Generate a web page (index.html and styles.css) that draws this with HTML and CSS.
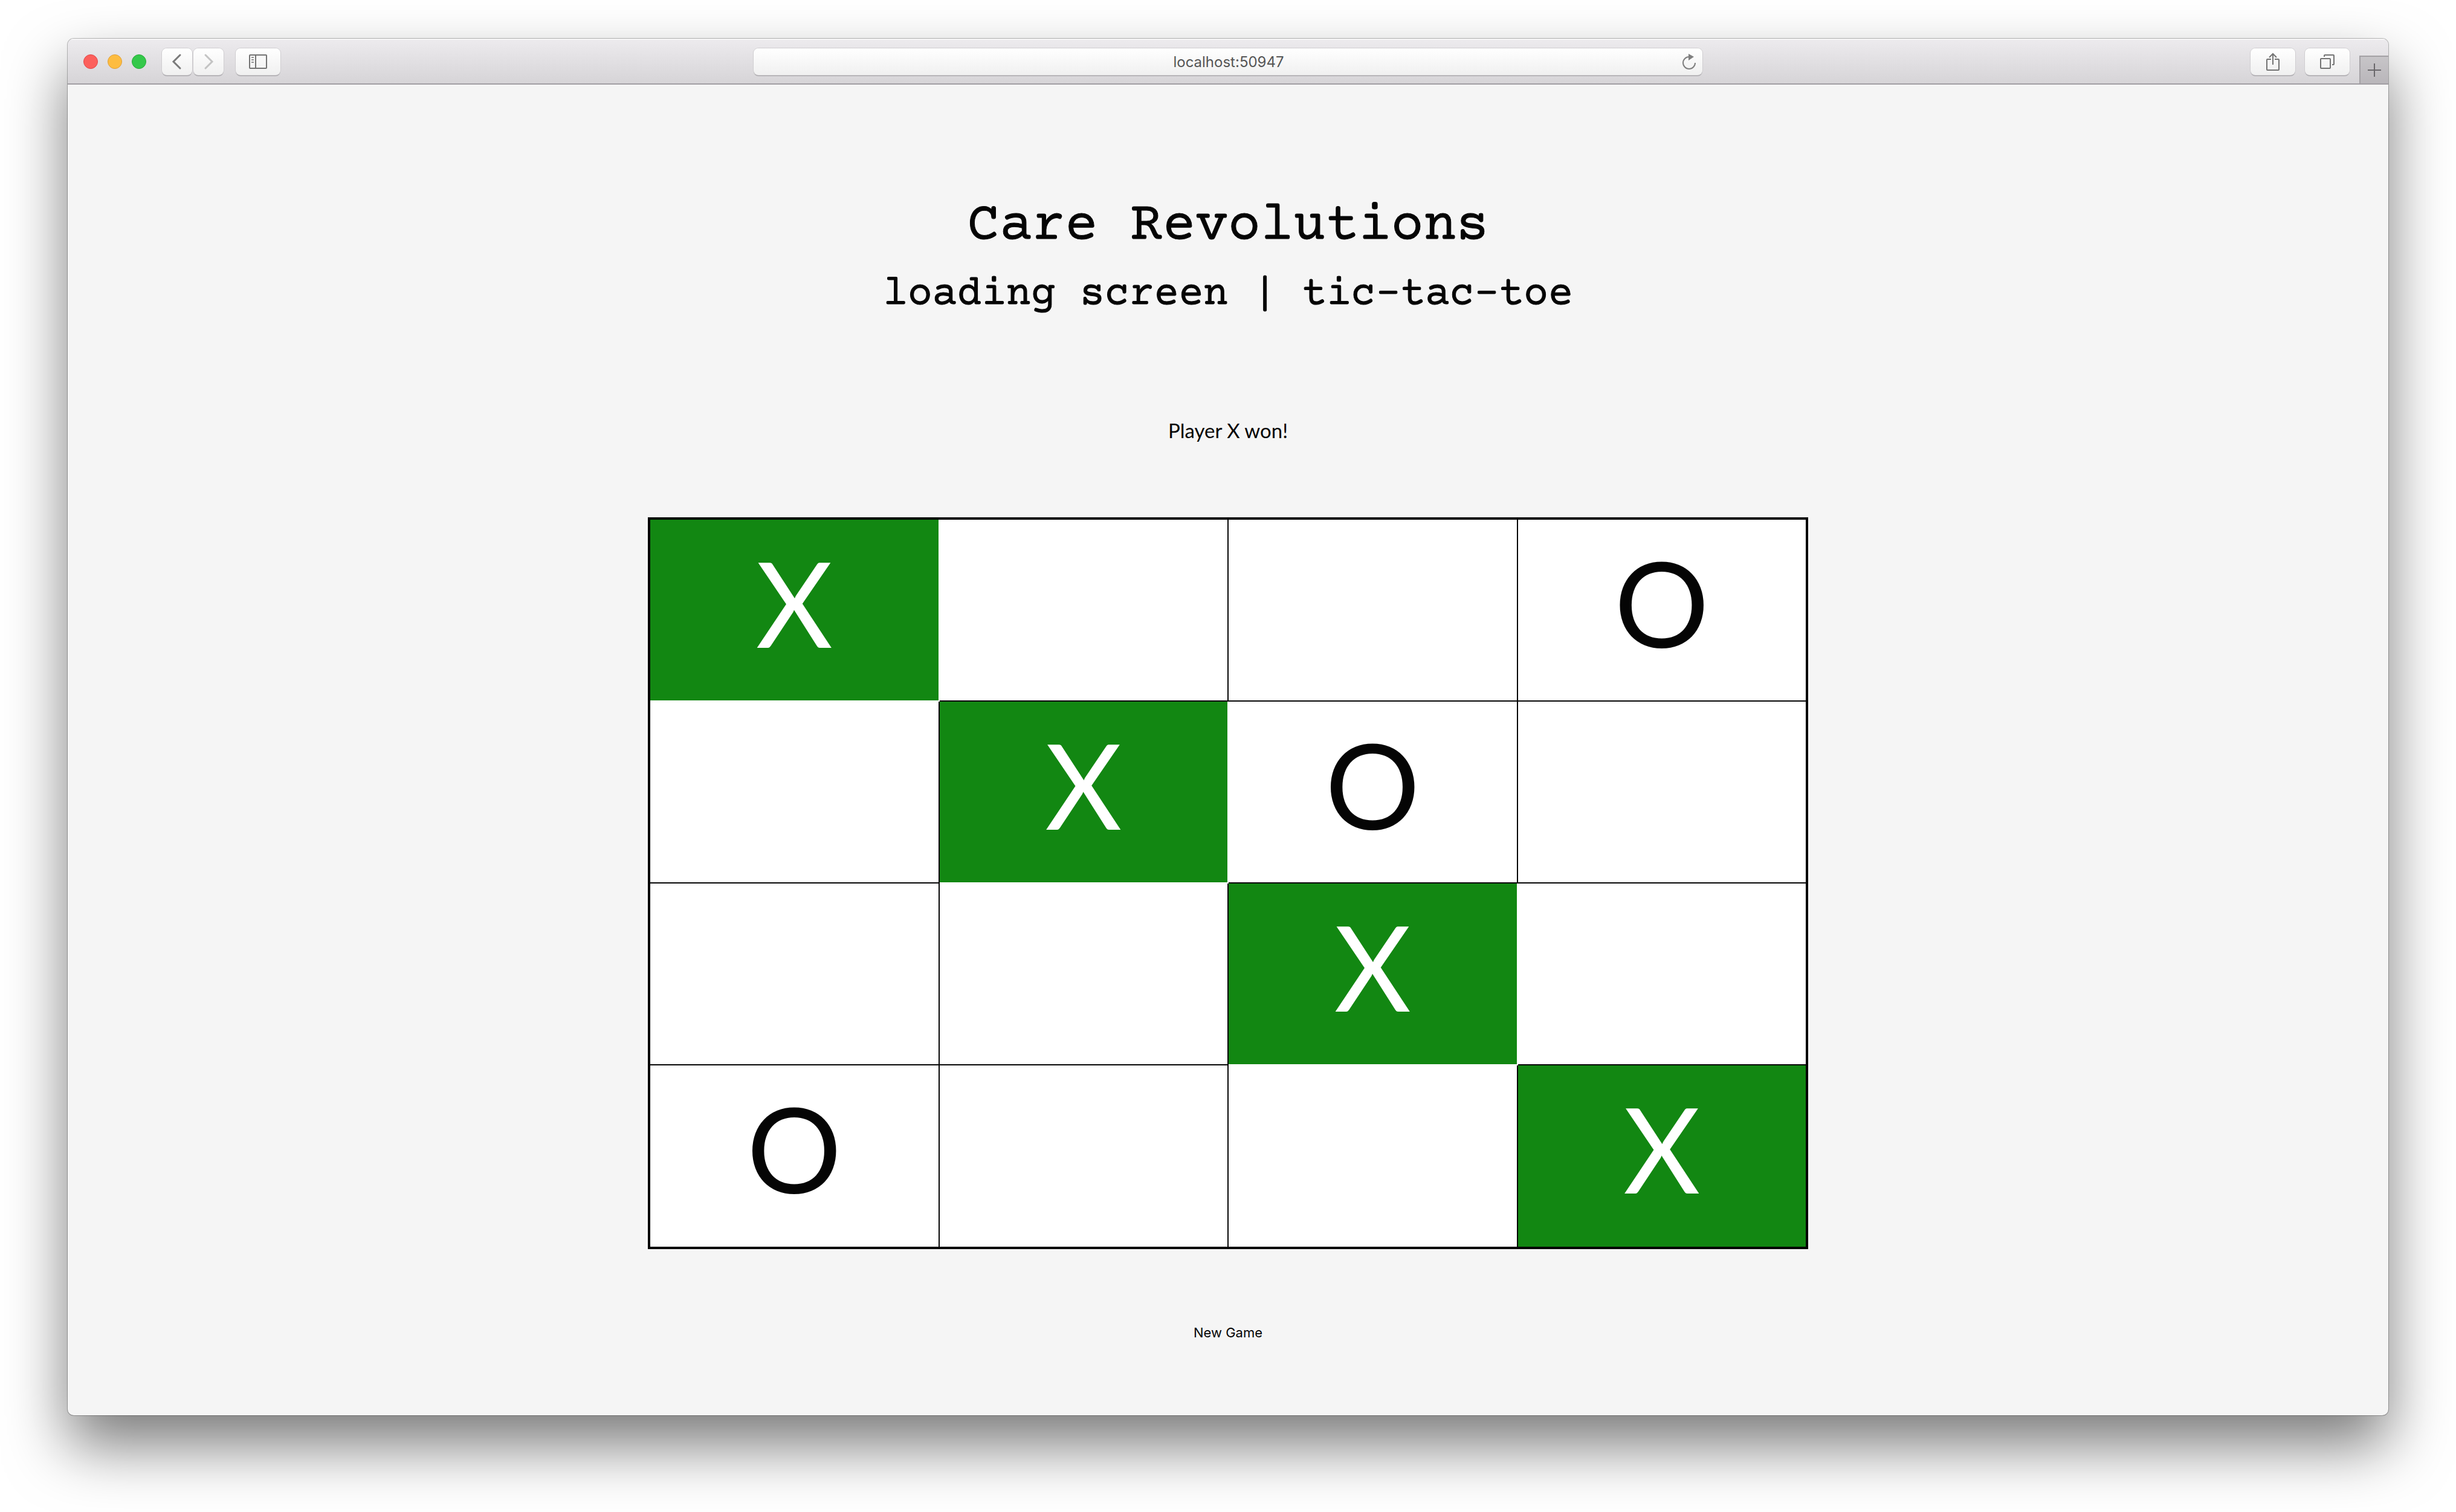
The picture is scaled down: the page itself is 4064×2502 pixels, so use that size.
FILE: index.html
```html
<!DOCTYPE html>
<html lang="en">
<head>
<meta charset="utf-8">
<meta name="viewport" content="width=device-width, initial-scale=1">
<title>Care Revolutions</title>
<link rel="stylesheet" href="styles.css">
</head>
<body>
<div class="window">
  <header class="toolbar">
    <div class="toolbar-left">
      <div class="lights">
        <button class="light light-close" aria-label="Close"></button>
        <button class="light light-minimize" aria-label="Minimize"></button>
        <button class="light light-zoom" aria-label="Zoom"></button>
      </div>
      <div class="history">
        <button class="tool tool-small" aria-label="Back">
          <svg width="24" height="28" viewBox="0 0 24 28"><path d="M17 3 6 14l11 11" stroke="#7a7a7a" stroke-width="3" stroke-linecap="round"/></svg>
        </button>
        <button class="tool tool-small" aria-label="Forward" disabled>
          <svg width="24" height="28" viewBox="0 0 24 28"><path d="M7 3l11 11L7 25" stroke="#c3c3c3" stroke-width="3" stroke-linecap="round"/></svg>
        </button>
      </div>
      <button class="tool" aria-label="Show sidebar">
        <svg width="30" height="24" viewBox="0 0 30 24"><rect x="1" y="1" width="28" height="22" rx="1" stroke="#737373" stroke-width="2"/><path d="M11 1v22" stroke="#737373" stroke-width="2"/><path d="M4 5h4M4 9h4M4 13h4" stroke="#929292" stroke-width="2"/></svg>
      </button>
    </div>
    <div class="address">
      <input class="address-input" type="text" aria-label="Address" value="localhost:50947">
      <button class="reload" aria-label="Reload">
        <svg width="24" height="28" viewBox="0 0 24 28"><path d="M22 16a10 10 0 1 1-10-10" stroke="#7f7f7f" stroke-width="2"/><path d="M11 1v11l9-6z" fill="#7f7f7f"/></svg>
      </button>
    </div>
    <div class="toolbar-right">
      <button class="tool" aria-label="Share">
        <svg width="22" height="32" viewBox="0 0 22 32"><path d="M8 12H2a1 1 0 0 0-1 1v16a1 1 0 0 0 1 1h18a1 1 0 0 0 1-1V13a1 1 0 0 0-1-1h-6" stroke="#737373" stroke-width="2"/><path d="M11 21V3M5 9l6-6 6 6" stroke="#737373" stroke-width="2"/></svg>
      </button>
      <button class="tool" aria-label="Show all tabs">
        <svg width="24" height="24" viewBox="0 0 24 24"><rect x="1" y="7" width="16" height="16" rx="1" stroke="#737373" stroke-width="2"/><path d="M7 4V2a1 1 0 0 1 1-1h14a1 1 0 0 1 1 1v14a1 1 0 0 1-1 1h-2" stroke="#737373" stroke-width="2"/></svg>
      </button>
      <button class="new-tab" aria-label="New tab">
        <svg width="22" height="22" viewBox="0 0 22 22"><path d="M11 0v22M0 11h22" stroke="#69676a" stroke-width="2"/></svg>
      </button>
    </div>
  </header>

  <main class="page">
    <h1 class="title">Care Revolutions</h1>
    <h2 class="subtitle">loading screen | tic-tac-toe</h2>
    <p class="status" role="status">Player X won!</p>
    <div class="board">
      <button class="cell win">X</button>
      <button class="cell" aria-label="Empty"></button>
      <button class="cell" aria-label="Empty"></button>
      <button class="cell">O</button>

      <button class="cell" aria-label="Empty"></button>
      <button class="cell win">X</button>
      <button class="cell">O</button>
      <button class="cell" aria-label="Empty"></button>

      <button class="cell" aria-label="Empty"></button>
      <button class="cell" aria-label="Empty"></button>
      <button class="cell win">X</button>
      <button class="cell" aria-label="Empty"></button>

      <button class="cell">O</button>
      <button class="cell" aria-label="Empty"></button>
      <button class="cell" aria-label="Empty"></button>
      <button class="cell win">X</button>
    </div>
    <button class="new-game">New Game</button>
  </main>
</div>
</body>
</html>
```
FILE: styles.css
```css
* {
  box-sizing: border-box;
}

body {
  display: flex;
  flex-direction: column;
  min-height: 100vh;
  margin: 0;
  padding: 64px 112px 160px;
  background: #fff;
  color: #050505;
  font-family: Inter, "Liberation Sans", sans-serif;
}

button,
input {
  margin: 0;
  padding: 0;
  border: 0;
  background: none;
  color: inherit;
  font: inherit;
}

svg {
  display: block;
  fill: none;
}

/* Browser window */

.window {
  display: flex;
  flex: 1;
  flex-direction: column;
  overflow: hidden;
  border-radius: 10px;
  background: #f5f5f5;
  box-shadow: 0 0 0 1px rgba(0, 0, 0, 0.26), 0 50px 100px rgba(0, 0, 0, 0.52);
}

.toolbar {
  display: grid;
  grid-template-columns: 1fr minmax(0, 1570px) 1fr;
  align-items: center;
  height: 76px;
  padding-top: 2px;
  border-bottom: 2px solid #a19ea3;
  background: linear-gradient(#edebee, #d6d4d7);
  box-shadow: inset 0 2px 0 #f6f5f6;
}

.toolbar-left,
.toolbar-right,
.lights,
.history {
  display: flex;
  align-items: center;
}

.toolbar-left {
  padding-left: 26px;
}

.lights {
  gap: 16px;
  margin-right: 26px;
}

.light {
  width: 24px;
  height: 24px;
  border: 1px solid;
  border-radius: 50%;
}

.light-close {
  border-color: #e2484a;
  background: #fc605c;
}

.light-minimize {
  border-color: #dfa03a;
  background: #fdbc40;
}

.light-zoom {
  border-color: #27ab38;
  background: #34c84a;
}

.history {
  gap: 2px;
  margin-right: 20px;
}

.tool,
.address {
  border-radius: 8px;
  background: linear-gradient(#fff, #f0f0f0);
  box-shadow: 0 0 0 1px #cfcdd0, 0 2px 0 #a5a3a7;
}

.tool {
  display: flex;
  align-items: center;
  justify-content: center;
  width: 74px;
  height: 44px;
}

.tool-small {
  width: 50px;
}

.address {
  display: flex;
  align-items: center;
  height: 44px;
  padding: 0 10px 0 48px;
}

.address-input {
  flex: 1;
  min-width: 0;
  height: 44px;
  color: #555;
  font-size: 24px;
  text-align: center;
}

.reload {
  display: flex;
  justify-content: flex-end;
  width: 36px;
}

.toolbar-right {
  align-self: stretch;
  justify-content: flex-end;
  gap: 16px;
}

.new-tab {
  display: flex;
  align-self: flex-end;
  align-items: center;
  justify-content: center;
  width: 48px;
  height: 46px;
  border: solid #a4a1a5;
  border-width: 2px 0 0 2px;
  background: linear-gradient(#c7c5c8, #b9b6ba);
}

/* Game */

.page {
  display: flex;
  flex: 1;
  flex-direction: column;
  align-items: center;
  padding: 184px 0 120px;
}

.title,
.subtitle {
  margin: 0;
  font-family: "Courier Prime", "Liberation Mono", monospace;
  font-weight: 400;
  text-align: center;
  -webkit-text-stroke: 1px currentColor;
}

.title {
  margin-bottom: 18px;
  font-size: 90px;
  line-height: 104px;
}

.subtitle {
  font-size: 68px;
  line-height: 84px;
}

.status {
  margin: 162px 0 124px;
  font-family: Lato, sans-serif;
  font-size: 33px;
  line-height: 40px;
}

.board {
  display: grid;
  grid-template-rows: repeat(3, 301px) 300px;
  grid-template-columns: repeat(3, 957fr) 953fr;
  width: 50%;
  border: 4px solid #050505;
  background: #fff;
}

.cell {
  padding-bottom: 26px;
  border: solid #050505;
  border-width: 0 2px 2px 0;
  background: #fff;
  font-family: Lato, sans-serif;
  font-size: 196px;
  line-height: 1;
}

.cell:nth-child(4n) {
  border-right-width: 0;
}

.cell:nth-child(n + 13) {
  border-bottom-width: 0;
}

.win {
  border-color: #fff;
  background: #128712;
  color: #fff;
}

.new-game {
  margin-top: 124px;
  font-size: 22px;
  line-height: 28px;
}
```
